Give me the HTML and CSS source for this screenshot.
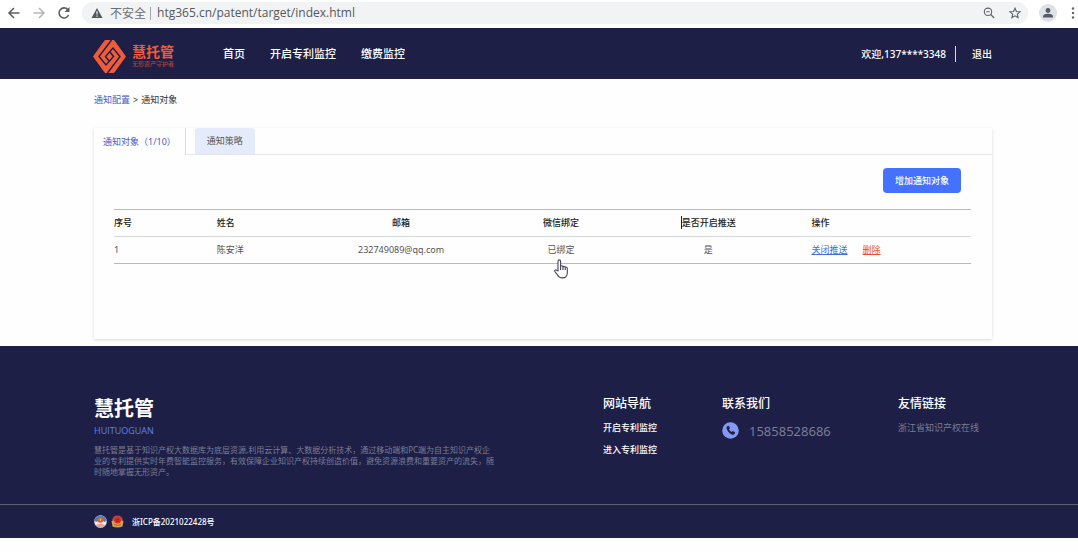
FILE: index.html
```html
<!DOCTYPE html>
<html lang="zh-CN">
<head>
    <meta charset="UTF-8">
    <meta name="viewport" content="width=device-width, initial-scale=1.0">
    <title>慧托管</title>
    <link rel="stylesheet" href="styles.css">
</head>
<body>
    <div class="browser-bar">
        <button class="icon-button" aria-label="后退">
            <svg width="14" height="14" viewBox="0 0 14 14" fill="none" stroke="#5a5d61" stroke-width="1.5"><path d="M12.5 7H2M7 2L2 7l5 5"/></svg>
        </button>
        <button class="icon-button" aria-label="前进">
            <svg width="14" height="14" viewBox="0 0 14 14" fill="none" stroke="#b4b6b9" stroke-width="1.5"><path d="M1.500 7H12M7 2l5 5-5 5"/></svg>
        </button>
        <button class="icon-button" aria-label="刷新">
            <svg width="14" height="14" viewBox="0 0 14 14" fill="none" stroke="#5a5d61" stroke-width="1.6"><path d="M11.600 9A5 5 0 1 1 10.800 3.600"/><path d="M12.500 1v5h-5z" fill="#5a5d61" stroke="none"/></svg>
        </button>
        <div class="address">
            <svg width="12" height="12" viewBox="0 0 12 12"><path d="M6 1L11.500 11H.5z" fill="#55585c"/><path d="M6 4.200v3.400M6 8.500v1.300" stroke="#f1f3f4" stroke-width="1.200"/></svg>
            <span class="unsafe">不安全</span>
            <input class="url" type="text" aria-label="地址" value="htg365.cn/patent/target/index.html">
            <button class="icon-button" aria-label="缩放">
                <svg width="12" height="12" viewBox="0 0 12 12" fill="none" stroke="#5f6368" stroke-width="1.100"><circle cx="5" cy="4.800" r="3.700"/><path d="M7.700 7.500l3.500 3.500M3.300 4.800h3.400"/></svg>
            </button>
            <button class="icon-button" aria-label="收藏">
                <svg width="12" height="12" viewBox="0 0 12 12" fill="none" stroke="#5f6368" stroke-width="1.100"><path d="M6 1.200l1.400 3.300 3.600.3-2.700 2.400.8 3.500L6 8.800l-3.100 1.900.8-3.500L1 4.800l3.600-.3z"/></svg>
            </button>
        </div>
        <button class="icon-button" aria-label="用户">
            <svg width="18" height="18" viewBox="0 0 18 18"><circle cx="9" cy="9" r="9" fill="#dee1e6"/><g fill="#555a66"><circle cx="9" cy="6.500" r="2.400"/><path d="M4 13.500v-1.300c0-1.700 3-2.500 5-2.500s5 .8 5 2.500v1.300z"/></g></svg>
        </button>
        <button class="icon-button" aria-label="菜单">
            <svg width="4" height="14" viewBox="0 0 4 14" fill="#5f6368"><circle cx="2" cy="2.500" r="1.200"/><circle cx="2" cy="7" r="1.200"/><circle cx="2" cy="11.500" r="1.200"/></svg>
        </button>
    </div>

    <header class="header">
        <div class="logo">
            <svg width="33" height="33" viewBox="0 0 33 33">
                <path d="M12 .5h9L32.500 16.500 21 32.500h-9L.5 16.500z" fill="#f15b38" stroke="#f15b38" stroke-linejoin="round"/>
                <g fill="none" stroke="#1d1f47" stroke-width="1.400">
                    <path d="M18.500 0L6 16.500l7 8.500 7.500-8.500-3.500-4.500"/>
                    <path d="M14.500 33L27 16.500 20 8l-7.500 8.500 3.500 4.500"/>
                </g>
            </svg>
            <div>
                <div class="logo-name">慧托管</div>
                <div class="logo-slogan">无形资产守护者</div>
            </div>
        </div>
        <nav class="nav">
            <a href="#">首页</a>
            <a href="#">开启专利监控</a>
            <a href="#">缴费监控</a>
        </nav>
        <div class="user">
            <span class="welcome">欢迎,137****3348</span>
            <a href="#">退出</a>
        </div>
    </header>

    <main class="main">
        <div class="breadcrumb"><a href="#">通知配置</a><span>&gt;</span><span>通知对象</span></div>

        <section class="panel">
            <div class="tabs">
                <button class="tab active">通知对象（1/10）</button>
                <button class="tab">通知策略</button>
            </div>
            <div class="panel-body">
                <button class="add-button">增加通知对象</button>
                <table class="table">
                    <colgroup>
                        <col class="col-index"><col class="col-name"><col class="col-mail">
                        <col class="col-wechat"><col class="col-push"><col class="col-action">
                    </colgroup>
                    <thead>
                        <tr>
                            <th>序号</th>
                            <th>姓名</th>
                            <th class="center">邮箱</th>
                            <th class="center">微信绑定</th>
                            <th class="center"><span class="caret">是否开启推送</span></th>
                            <th>操作</th>
                        </tr>
                    </thead>
                    <tbody>
                        <tr>
                            <td>1</td>
                            <td>陈安洋</td>
                            <td class="center">232749089@qq.com</td>
                            <td class="center">
                                <span class="bound">已绑定
                                    <svg class="pointer" width="14" height="20" viewBox="0 0 14 20" fill="#fff" stroke="#444658" stroke-width="1.100" stroke-linejoin="round"><path d="M4 12V2.200a1.300 1.300 0 0 1 2.600 0v5c.8-.8 2.200-.6 2.400.5.8-.6 2-.3 2.200.6.900-.4 2.100.1 2.100 1.200v4.200c0 3.200-1.800 5.200-5 5.200-2.600 0-4-1.300-5-3.200L.8 12.500c-.6-1.200.9-2.100 1.800-1.200z"/><path d="M6.600 7v4M9 7.700v3.300M11.200 8.500v2.500" fill="none"/></svg>
                                </span>
                            </td>
                            <td class="center">是</td>
                            <td><a class="close-link" href="#">关闭推送</a><a class="delete-link" href="#">删除</a></td>
                        </tr>
                    </tbody>
                </table>
            </div>
        </section>
    </main>

    <footer class="footer">
        <div class="footer-top">
            <div class="about">
                <h2>慧托管</h2>
                <div class="pinyin">HUITUOGUAN</div>
                <p>慧托管是基于知识产权大数据库为底层资源,利用云计算、大数据分析技术，通过移动端和PC端为自主知识产权企<br>业的专利提供实时年费智能监控服务，有效保障企业知识产权持续创造价值，避免资源浪费和重要资产的流失，随<br>时随地掌握无形资产。</p>
            </div>
            <div class="site-nav">
                <h3>网站导航</h3>
                <a href="#">开启专利监控</a>
                <a href="#">进入专利监控</a>
            </div>
            <div class="contact">
                <h3>联系我们</h3>
                <div class="phone">
                    <svg width="17" height="17" viewBox="0 0 17 17"><circle cx="8.500" cy="8.500" r="8.300" fill="#8499f5"/><path d="M5.200 4.300l1.500-.6 1.300 2.600-1 1c.5 1.200 1.300 2 2.500 2.600l1-1 2.600 1.400-.6 1.600c-.5.900-1.700.9-2.700.5C7.300 11.300 5.700 9.600 4.800 7c-.3-1-.4-2 .4-2.700z" fill="#1d1f47"/></svg>
                    <span>15858528686</span>
                </div>
            </div>
            <div class="friends">
                <h3>友情链接</h3>
                <a href="#">浙江省知识产权在线</a>
            </div>
        </div>
        <div class="footer-bottom">
            <svg width="13" height="13" viewBox="0 0 13 13"><circle cx="6.500" cy="6.500" r="6.300" fill="#f3e6e2"/><path d="M.3 6A6.300 6.300 0 0 1 12.700 6L10 7 6.500 2 3 7z" fill="#3c86c4"/><circle cx="6.500" cy="4.800" r="2.900" fill="#e8552f"/><path d="M5.700 3.300l2 .8-1.500 2.700z" fill="#f6bd4b"/><path d="M1.500 10.300q5-3 10 0a6.300 6.300 0 0 1-10 0z" fill="#e3a29b"/></svg>
            <svg width="13" height="13" viewBox="0 0 13 13"><path d="M1 5.500Q2 .5 6.500.5T12 5.500z" fill="#b9503c"/><path d="M.5 6l2.500-.8h7l2.500.8-1 5.500q-5 2-10 0z" fill="#e0a04a"/><circle cx="6.500" cy="5" r="3.500" fill="#d92d2b"/><path d="M4.500 4.200h4M5 6h3" stroke="#8e2830"/><path d="M3 9.500q3.500 2 7 0" fill="none" stroke="#a86533"/></svg>
            <a href="#">浙ICP备2021022428号</a>
        </div>
    </footer>
</body>
</html>
```
FILE: styles.css
```css
body {
    margin: 0;
    background: #fefefe;
    color: #555;
    font-family: "Noto Sans", "Noto Sans CJK SC", sans-serif;
    font-size: 9px;
    line-height: 12px;
}

a {
    color: inherit;
    text-decoration: none;
}

button {
    font: inherit;
    border: none;
    cursor: pointer;
}

svg {
    display: block;
    flex: none;
}

h2, h3, p {
    margin: 0;
}

/* browser toolbar */
.browser-bar {
    display: flex;
    align-items: center;
    gap: 11px;
    height: 26px;
    padding: 0 3px 2px 7px;
    background: #fff;
}

.icon-button {
    background: none;
    padding: 0;
}

.address {
    flex: 1;
    display: flex;
    align-items: center;
    height: 22px;
    padding: 0 7px 0 9px;
    border-radius: 11px;
    background: #f1f3f4;
    font-size: 12px;
    line-height: 16px;
    color: #6b6e73;
}

.address .icon-button {
    margin-left: 14px;
}

.browser-bar > .icon-button:last-child {
    margin-left: 3px;
}

.unsafe {
    margin-left: 7px;
    padding-right: 4px;
    border-right: 1px solid #a3a6aa;
    line-height: 13px;
}

.url {
    flex: 1;
    min-width: 0;
    margin-left: 6px;
    padding: 0;
    border: none;
    outline: none;
    background: none;
    font: inherit;
    font-family: "Open Sans", sans-serif;
    color: #55585c;
}

/* header */
.header {
    display: flex;
    align-items: center;
    height: 51px;
    padding: 0 86px 0 93px;
    background: #1d1f47;
    color: #fff;
    font-size: 11px;
    line-height: 16px;
    font-weight: 500;
}

.logo {
    display: flex;
    align-items: center;
    gap: 6px;
    margin-top: 5px;
    color: #f15b38;
}

.logo-name {
    font-size: 14px;
    line-height: 16px;
    font-weight: bold;
}

.logo-slogan {
    font-size: 6px;
    line-height: 8px;
    color: #a8443c;
}

.nav {
    display: flex;
    flex: 1;
    gap: 25px;
    margin-left: 49px;
}

.user {
    display: flex;
    font-size: 10px;
}

.welcome {
    padding-right: 9px;
    margin-right: 16px;
    border-right: 1px solid #d8d8e0;
}

/* content */
.main {
    padding: 15px 86px 7px 94px;
}

.breadcrumb {
    display: flex;
    gap: 3px;
    margin-bottom: 22px;
    color: #333;
}

.breadcrumb a {
    color: #4a5cc0;
}

.panel {
    min-height: 211px;
    box-shadow: 0 1px 3px rgba(0, 0, 0, 0.14);
}

.tabs {
    display: flex;
    gap: 9px;
    height: 26px;
    border-bottom: 1px solid #e6e7ea;
}

.tab {
    padding: 0 12px;
    border-radius: 3px 3px 0 0;
    background: #e4ecfc;
    color: #555;
}

.tab.active {
    margin-bottom: -1px;
    padding: 0 9px;
    border-right: 1px solid #dcdde2;
    border-radius: 0;
    background: #fefefe;
    color: #4a5cc0;
}

.panel-body {
    display: flex;
    flex-direction: column;
    padding: 13px 21px 0 20px;
}

.add-button {
    align-self: flex-end;
    height: 25px;
    margin: 0 10px 16px 0;
    padding: 0 12px;
    border-radius: 4px;
    background: #4471fd;
    color: #fff;
    font-weight: 500;
}

.table {
    width: 100%;
    table-layout: fixed;
    border-collapse: collapse;
}

.table th,
.table td {
    height: 26px;
    padding: 0;
    border-top: 1px solid #b9babd;
    border-bottom: 1px solid #b9babd;
    text-align: left;
}

.table th {
    border-bottom-color: #d6d7d9;
    color: #222;
    font-weight: 500;
}

.table td {
    border-top: none;
}

.table .center {
    text-align: center;
}

.col-index { width: 12%; }
.col-name { width: 8%; }
.col-mail { width: 27%; }
.col-wechat { width: 10.3%; }
.col-push { width: 24.1%; }

.caret {
    border-left: 1px solid #222;
}

.bound {
    position: relative;
}

/* hand cursor hovering over the cell */
.pointer {
    position: absolute;
    left: 7px;
    top: 16px;
}

.close-link {
    margin-right: 15px;
    color: #3f6fd8;
    text-decoration: underline;
}

.delete-link {
    color: #e0532f;
    text-decoration: underline;
}

/* footer */
.footer {
    background: #1d1f47;
    color: #fff;
}

.footer-top {
    display: flex;
    height: 108px;
    padding: 50px 86px 0 94px;
    border-bottom: 1px solid #5d5f73;
}

.footer h3 {
    margin-bottom: 10px;
    font-size: 12px;
    line-height: 16px;
    font-weight: 500;
}

.about {
    flex: 1;
}

.about h2 {
    font-size: 20px;
    line-height: 26px;
}

.pinyin {
    margin: 3px 0 7px;
    font-family: "Open Sans", sans-serif;
    color: #5f80f0;
}

.about p {
    color: #7b7d93;
    font-size: 8px;
    line-height: 11px;
    white-space: nowrap;
}

.site-nav {
    display: flex;
    flex-direction: column;
    width: 119px;
    font-weight: 500;
}

.site-nav a {
    margin-bottom: 10px;
}

.contact {
    width: 176px;
}

.phone {
    display: flex;
    align-items: center;
    gap: 10px;
    color: #7b7d93;
    font-size: 13px;
    line-height: 16px;
}

.friends {
    width: 94px;
    color: #7b7d93;
}

.friends h3 {
    color: #fff;
}

.footer-bottom {
    display: flex;
    align-items: center;
    gap: 4px;
    height: 33px;
    padding: 0 94px;
    font-size: 8px;
    font-weight: 500;
}

.footer-bottom a {
    margin-left: 4px;
}
```
